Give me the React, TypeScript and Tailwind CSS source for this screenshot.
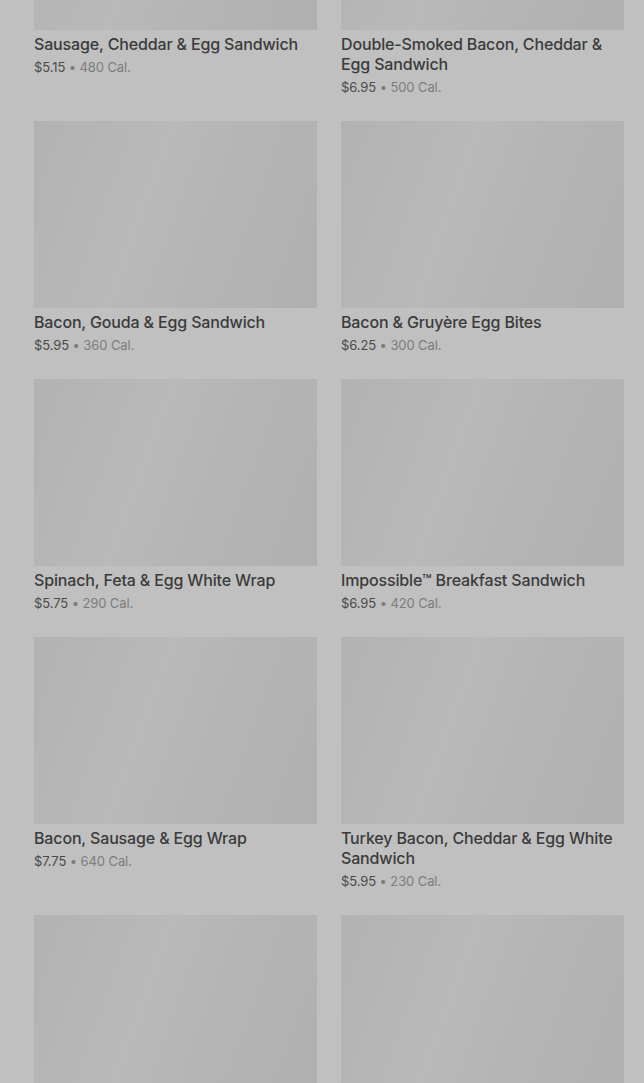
type Item = { name: string; price: string; cal: string } | null;

const items: Item[] = [
  { name: "Sausage, Cheddar & Egg Sandwich", price: "$5.15", cal: "480 Cal." },
  { name: "Double-Smoked Bacon, Cheddar & Egg Sandwich", price: "$6.95", cal: "500 Cal." },
  { name: "Bacon, Gouda & Egg Sandwich", price: "$5.95", cal: "360 Cal." },
  { name: "Bacon & Gruyère Egg Bites", price: "$6.25", cal: "300 Cal." },
  { name: "Spinach, Feta & Egg White Wrap", price: "$5.75", cal: "290 Cal." },
  { name: "Impossible™ Breakfast Sandwich", price: "$6.95", cal: "420 Cal." },
  { name: "Bacon, Sausage & Egg Wrap", price: "$7.75", cal: "640 Cal." },
  { name: "Turkey Bacon, Cheddar & Egg White Sandwich", price: "$5.95", cal: "230 Cal." },
  // next row is cut off by the viewport, only images visible
  null,
  null,
];

function MenuCard({ item }: { item: Item }) {
  return (
    <div className="flex flex-col">
      {/* Image placeholder (skeleton) */}
      <div className="h-[187px] w-full bg-[linear-gradient(110deg,#b2b2b2_0%,#b9b9b9_40%,#b5b5b5_60%,#b0b0b0_100%)]" />
      {item && (
        <>
          <p className="mt-[4px] text-[16px] leading-[20px] font-medium tracking-[-0.15px] text-[#3b3b3b]">
            {item.name}
          </p>
          <p className="mt-[3px] text-[13px] leading-[20px] tracking-[-0.1px]">
            <span className="text-[#4a4a4a]">{item.price}</span>
            <span className="text-[#7d7d7d]"> • {item.cal}</span>
          </p>
        </>
      )}
    </div>
  );
}

export default function App() {
  return (
    <div
      className="h-[1083px] overflow-hidden bg-[#c0c0c0]"
      style={{ fontFamily: "Inter, 'Noto Sans', sans-serif" }}
    >
      <div className="mt-[-157px] grid grid-cols-2 gap-x-[24px] gap-y-[24px] pl-[34px] pr-[20px]">
        {items.map((item, i) => (
          <MenuCard key={i} item={item} />
        ))}
      </div>
    </div>
  );
}
